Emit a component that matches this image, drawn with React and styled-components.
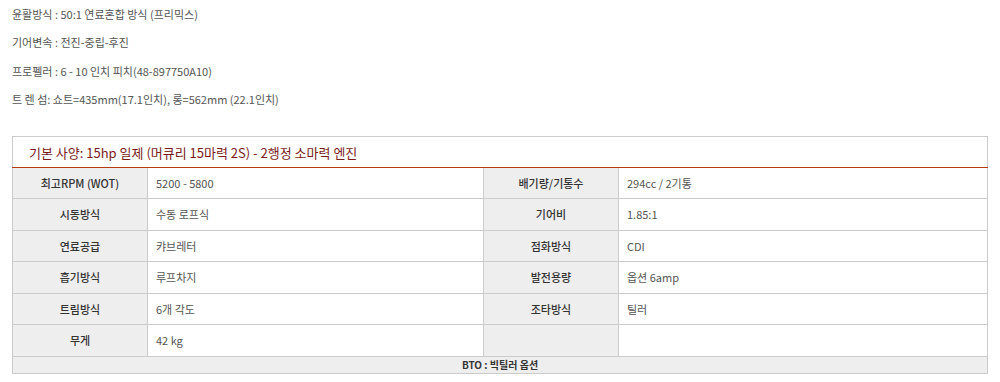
import styled, { createGlobalStyle } from "styled-components";

const GlobalStyle = createGlobalStyle`
  body {
    margin: 0;
    background: #fff;
    font-family: "Noto Sans CJK KR", "Noto Sans", sans-serif;
  }
`;

const notes = [
  "윤활방식 : 50:1 연료혼합 방식 (프리믹스)",
  "기어변속 : 전진-중립-후진",
  "프로펠러 : 6 - 10 인치 피치(48-897750A10)",
  "트 렌 섬: 쇼트=435mm(17.1인치), 롱=562mm (22.1인치)",
];

const specs = [
  ["최고RPM (WOT)", "5200 - 5800", "배기량/기통수", "294cc / 2기통"],
  ["시동방식", "수동 로프식", "기어비", "1.85:1"],
  ["연료공급", "캬브레터", "점화방식", "CDI"],
  ["흡기방식", "루프차지", "발전용량", "옵션 6amp"],
  ["트림방식", "6개 각도", "조타방식", "틸러"],
  ["무게", "42 kg", "", ""],
];

const App = () => {
  return (
    <Page>
      <GlobalStyle />
      <Notes>
        {notes.map((line) => (
          <Note key={line}>{line}</Note>
        ))}
      </Notes>
      <SpecTable>
        <colgroup>
          <col style={{ width: 135 }} />
          <col style={{ width: 336 }} />
          <col style={{ width: 135 }} />
          <col />
        </colgroup>
        <thead>
          <tr>
            <Title colSpan={4}>
              기본 사양: 15hp 일제 (머큐리 15마력 2S) - 2행정 소마력 엔진
            </Title>
          </tr>
        </thead>
        <tbody>
          {specs.map(([k1, v1, k2, v2]) => (
            <tr key={k1}>
              <Label>{k1}</Label>
              <Value>{v1}</Value>
              <Label>{k2}</Label>
              <Value>{v2}</Value>
            </tr>
          ))}
          <tr>
            <Footer colSpan={4}>BTO : 빅틸러 옵션</Footer>
          </tr>
        </tbody>
      </SpecTable>
    </Page>
  );
};

export default App;

const Page = styled.div`
  padding: 0 12px;
  width: 976px;
`;

const Notes = styled.div`
  padding-bottom: 22px;
`;

const Note = styled.p`
  margin: 0;
  font-size: 11px;
  line-height: 28.4px;
  color: #555;
`;

const SpecTable = styled.table`
  width: 976px;
  table-layout: fixed;
  border-collapse: collapse;
  border: 1px solid #ccc;
  font-size: 11px;
`;

const Title = styled.th`
  height: 31px;
  padding: 2px 16px 0;
  box-sizing: border-box;
  text-align: left;
  font-size: 13px;
  font-weight: normal;
  color: #7a1a1a;
  border-bottom: 1px solid #b83a0c;
`;

const Label = styled.td`
  height: 31.5px;
  padding: 0;
  box-sizing: border-box;
  text-align: center;
  background: #eee;
  color: #333;
  font-weight: 500;
  border: 1px solid #ccc;
`;

const Value = styled.td`
  height: 31.5px;
  padding: 0 8px;
  box-sizing: border-box;
  color: #555;
  border: 1px solid #ccc;
`;

const Footer = styled.td`
  height: 17px;
  padding: 0;
  box-sizing: border-box;
  text-align: center;
  background: #eee;
  color: #333;
  font-size: 10px;
  font-weight: 700;
  border: 1px solid #ccc;
`;
